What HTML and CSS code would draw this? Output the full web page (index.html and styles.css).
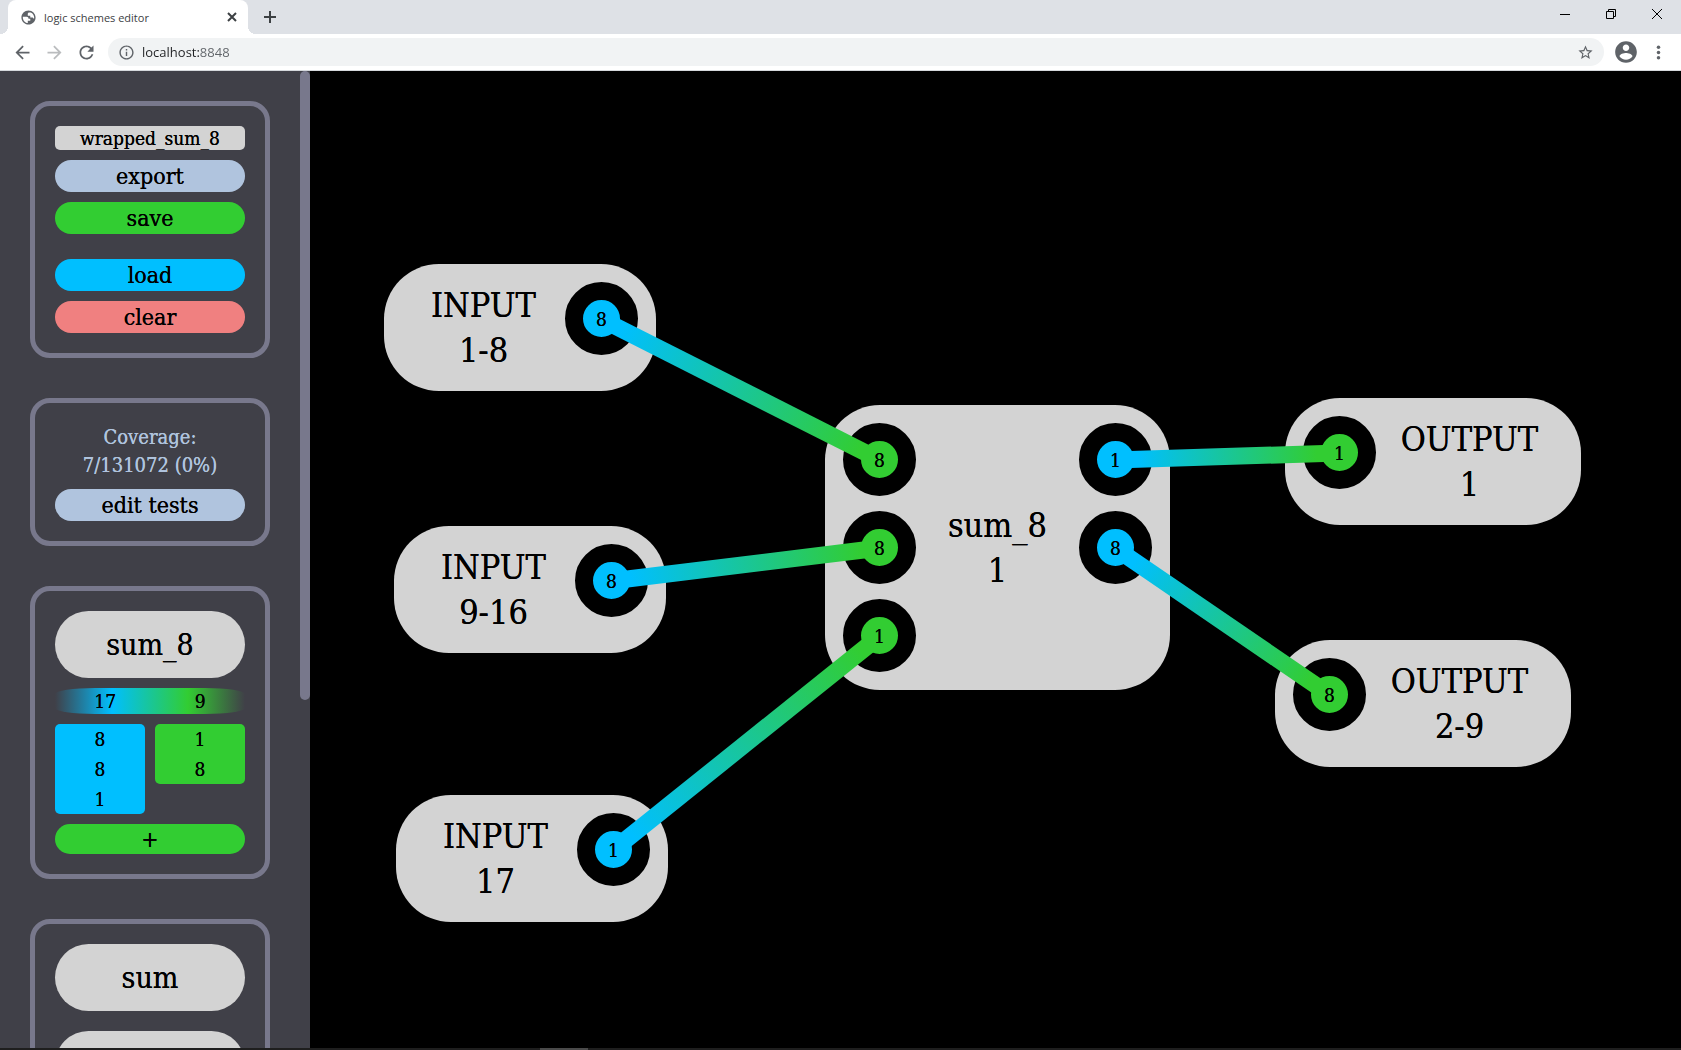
FILE: index.html
```html
<!DOCTYPE html>
<html lang="en">
<head>
<meta charset="utf-8">
<title>logic schemes editor</title>
<link rel="stylesheet" href="styles.css">
</head>
<body>
<header class="tabstrip">
  <div class="tab">
    <svg class="icon-17" viewBox="0 0 24 24" fill="#5f6368"><path d="M12 2C6.480 2 2 6.480 2 12s4.480 10 10 10 10-4.480 10-10S17.520 2 12 2zm-1 17.930c-3.950-.49-7-3.850-7-7.930 0-.3 0-.6.1-.9h5.400c1.500 0 2.500 1.200 2.500 2.500h2.500v3H11v3.330zM20 12c0 .8-.1 1.500-.3 2.200-.5-1.300-1.400-2.200-2.700-2.200h-2.500V9.500H11V7c0-1.100.9-2 2-2h2.200C18 6.300 20 9 20 12z"/></svg>
    <span class="tab-title">logic schemes editor</span>
    <button class="chrome-btn" aria-label="Close tab"><svg width="10" height="10" viewBox="0 0 10 10" stroke="#3c4043" stroke-width="2"><path d="M1 1l8 8M9 1l-8 8"/></svg></button>
  </div>
  <button class="chrome-btn new-tab" aria-label="New tab"><svg width="12" height="12" viewBox="0 0 12 12" stroke="#3c4043" stroke-width="2"><path d="M6 0v12M0 6h12"/></svg></button>
  <div class="window-controls">
    <button class="window-btn" aria-label="Minimize"><svg width="10" height="10" viewBox="0 0 10 10"><path d="M0 5.500h10" stroke="#000"/></svg></button>
    <button class="window-btn" aria-label="Restore"><svg width="10" height="10" viewBox="0 0 10 10" fill="none" stroke="#000"><path d="M.5 2.500h7v7h-7zM2.500 2.500v-2h7v7h-2"/></svg></button>
    <button class="window-btn" aria-label="Close"><svg width="10" height="10" viewBox="0 0 10 10" stroke="#000"><path d="M0 0l10 10M10 0L0 10"/></svg></button>
  </div>
</header>
<nav class="toolbar">
  <button class="chrome-btn" aria-label="Back"><svg class="icon-21" viewBox="0 0 24 24" fill="#5f6368"><path d="M20 11H7.830l5.590-5.590L12 4l-8 8 8 8 1.410-1.410L7.830 13H20v-2z"/></svg></button>
  <button class="chrome-btn" aria-label="Forward" disabled><svg class="icon-21" viewBox="0 0 24 24" fill="#babcbe"><path d="M12 4l-1.410 1.410L16.170 11H4v2h12.170l-5.580 5.590L12 20l8-8z"/></svg></button>
  <button class="chrome-btn" aria-label="Reload"><svg class="icon-21" viewBox="0 0 24 24" fill="#5f6368"><path d="M17.650 6.350C16.200 4.900 14.210 4 12 4c-4.420 0-7.990 3.580-7.990 8s3.570 8 7.990 8c3.730 0 6.840-2.550 7.730-6h-2.080c-.82 2.330-3.040 4-5.650 4-3.310 0-6-2.690-6-6s2.690-6 6-6c1.660 0 3.140.69 4.220 1.780L13 11h7V4l-2.350 2.350z"/></svg></button>
  <div class="omnibox">
    <svg class="icon-17" viewBox="0 0 24 24" fill="#5f6368"><path d="M11 17h2v-6h-2v6zm1-15C6.480 2 2 6.480 2 12s4.480 10 10 10 10-4.480 10-10S17.520 2 12 2zm0 18c-4.410 0-8-3.590-8-8s3.590-8 8-8 8 3.590 8 8-3.590 8-8 8zM11 9h2V7h-2v2z"/></svg>
    <input class="address" type="text" aria-label="Address" value="localhost:8848">
    <button class="chrome-btn" aria-label="Bookmark"><svg class="icon-17" viewBox="0 0 24 24" fill="#5f6368"><path d="M22 9.240l-7.190-.62L12 2 9.190 8.630 2 9.240l5.460 4.730L5.820 21 12 17.270 18.180 21l-1.630-7.030L22 9.240zM12 15.400l-3.760 2.270 1-4.280-3.320-2.880 4.380-.38L12 6.100l1.710 4.040 4.380.38-3.320 2.880 1 4.280L12 15.400z"/></svg></button>
  </div>
  <button class="chrome-btn profile" aria-label="Profile"><svg class="icon-26" viewBox="0 0 24 24" fill="#5f6368"><path d="M12 2C6.480 2 2 6.480 2 12s4.480 10 10 10 10-4.480 10-10S17.520 2 12 2zm0 3c1.660 0 3 1.340 3 3s-1.340 3-3 3-3-1.340-3-3 1.340-3 3-3zm0 14.200c-2.500 0-4.710-1.280-6-3.220.03-1.990 4-3.080 6-3.080 1.990 0 5.970 1.090 6 3.080-1.290 1.940-3.500 3.220-6 3.220z"/></svg></button>
  <button class="chrome-btn" aria-label="Menu"><svg class="icon-21" viewBox="0 0 24 24" fill="#5f6368"><circle cx="12" cy="6" r="2"/><circle cx="12" cy="12" r="2"/><circle cx="12" cy="18" r="2"/></svg></button>
</nav>
<main class="app">
  <aside class="sidebar">
    <div class="panels">
      <section class="panel">
        <input class="scheme-name" type="text" aria-label="Scheme name" value="wrapped_sum_8">
        <button class="btn steel">export</button>
        <button class="btn green">save</button>
        <button class="btn blue load">load</button>
        <button class="btn red">clear</button>
      </section>
      <section class="panel">
        <p class="coverage">Coverage:<br>7/131072 (0%)</p>
        <button class="btn steel">edit tests</button>
      </section>
      <section class="panel">
        <button class="block">sum_8</button>
        <div class="totals"><span>17</span><span>9</span></div>
        <div class="pins">
          <ul class="pin-list blue"><li>8</li><li>8</li><li>1</li></ul>
          <ul class="pin-list green"><li>1</li><li>8</li></ul>
        </div>
        <button class="btn add green">+</button>
      </section>
      <section class="panel library">
        <button class="block">sum</button>
        <button class="block" aria-label="Next block"></button>
      </section>
    </div>
    <div class="scroll-track"><div class="scroll-thumb"></div></div>
  </aside>
  <section class="stage">
    <article class="node input n1"><h2 class="label">INPUT<br>1-8</h2><div class="ports"><div class="port out"><span>8</span></div></div></article>
    <article class="node input n2"><h2 class="label">INPUT<br>9-16</h2><div class="ports"><div class="port out"><span>8</span></div></div></article>
    <article class="node input n3"><h2 class="label">INPUT<br>17</h2><div class="ports"><div class="port out"><span>1</span></div></div></article>
    <article class="node sum n4">
      <div class="ports"><div class="port in"><span>8</span></div><div class="port in"><span>8</span></div><div class="port in"><span>1</span></div></div>
      <h2 class="label">sum_8<br>1</h2>
      <div class="ports"><div class="port out"><span>1</span></div><div class="port out"><span>8</span></div></div>
    </article>
    <article class="node output n5"><div class="ports"><div class="port in"><span>1</span></div></div><h2 class="label">OUTPUT<br>1</h2></article>
    <article class="node output n6"><div class="ports"><div class="port in"><span>8</span></div></div><h2 class="label">OUTPUT<br>2-9</h2></article>
    <svg class="wires" fill="none" stroke-width="17">
      <defs>
        <linearGradient id="w1" gradientUnits="userSpaceOnUse" x1="291" y1="248" x2="570" y2="389"><stop offset=".07" stop-color="#00bfff"/><stop offset=".93" stop-color="#32cd32"/></linearGradient>
        <linearGradient id="w2" gradientUnits="userSpaceOnUse" x1="301" y1="510" x2="570" y2="477"><stop offset=".07" stop-color="#00bfff"/><stop offset=".93" stop-color="#32cd32"/></linearGradient>
        <linearGradient id="w3" gradientUnits="userSpaceOnUse" x1="303" y1="779" x2="570" y2="565"><stop offset=".07" stop-color="#00bfff"/><stop offset=".93" stop-color="#32cd32"/></linearGradient>
        <linearGradient id="w4" gradientUnits="userSpaceOnUse" x1="805" y1="389" x2="1029" y2="382"><stop offset=".1" stop-color="#00bfff"/><stop offset=".9" stop-color="#32cd32"/></linearGradient>
        <linearGradient id="w5" gradientUnits="userSpaceOnUse" x1="805" y1="477" x2="1020" y2="624"><stop offset=".09" stop-color="#00bfff"/><stop offset=".91" stop-color="#32cd32"/></linearGradient>
      </defs>
      <path stroke="url(#w1)" d="M291 248L570 389"/>
      <path stroke="url(#w2)" d="M301 510L570 477"/>
      <path stroke="url(#w3)" d="M303 779L570 565"/>
      <path stroke="url(#w4)" d="M805 389L1029 382"/>
      <path stroke="url(#w5)" d="M805 477L1020 624"/>
    </svg>
  </section>
</main>
<footer class="taskbar"><div class="task"></div></footer>
</body>
</html>
```
FILE: styles.css
```css
* { box-sizing: border-box; }

body {
  margin: 0;
  height: 100vh;
  display: flex;
  flex-direction: column;
  overflow: hidden;
  background: #000;
  font-family: "DejaVu Serif Condensed", "DejaVu Serif", serif;
  color: #000;
}

button, input {
  font: inherit;
  color: inherit;
  border: 0;
  margin: 0;
  padding: 0;
}

svg { display: block; flex: none; }

/* Browser frame */
.tabstrip {
  display: flex;
  flex: none;
  height: 34px;
  padding: 0 1px 0 8px;
  background: #dee1e6;
  font-family: "Open Sans", sans-serif;
}

.tab {
  position: relative;
  display: flex;
  align-items: center;
  gap: 7px;
  width: 240px;
  padding: 0 11px 0 12px;
  background: #fff;
  border-radius: 8px 8px 0 0;
}

.tab::before, .tab::after {
  content: "";
  position: absolute;
  bottom: 0;
  width: 8px;
  height: 8px;
}
.tab::before { right: 100%; background: radial-gradient(circle at 0 0, transparent 8px, #fff 8px); }
.tab::after { left: 100%; background: radial-gradient(circle at 100% 0, transparent 8px, #fff 8px); }

.tab-title { flex: 1; font-size: 11px; color: #3c4043; white-space: nowrap; }

.chrome-btn {
  display: flex;
  align-items: center;
  justify-content: center;
  background: none;
}
.new-tab { width: 44px; }
.profile { width: 22px; }

.window-controls { display: flex; margin-left: auto; }
.window-btn {
  display: flex;
  align-items: center;
  justify-content: center;
  width: 46px;
  height: 28px;
  background: none;
}

.icon-17 { width: 17px; height: 17px; }
.icon-21 { width: 21px; height: 21px; }
.icon-26 { width: 26px; height: 26px; }

.toolbar {
  display: flex;
  flex: none;
  align-items: center;
  gap: 11px;
  height: 37px;
  padding: 0 12px;
  background: #fff;
  border-bottom: 1px solid #d5d8dc;
  font-family: "Open Sans", sans-serif;
}

.omnibox {
  display: flex;
  flex: 1;
  align-items: center;
  gap: 7px;
  height: 28px;
  padding: 0 10px;
  background: #f1f3f4;
  border-radius: 14px;
}

.address {
  flex: 1;
  min-width: 0;
  font-size: 13px;
  color: transparent;
  caret-color: #202124;
  background: linear-gradient(90deg, #202124 58px, #5f6368 58px);
  -webkit-background-clip: text;
  background-clip: text;
}

/* Application */
.app {
  display: flex;
  flex: 1;
  min-height: 0;
  text-shadow: 0 0 0 currentColor;
}

.app button, .app input { text-shadow: inherit; }

.sidebar {
  display: flex;
  flex: none;
  width: 310px;
  overflow: hidden;
  background: #404048;
}

.panels {
  display: flex;
  flex: 1;
  flex-direction: column;
  gap: 40px;
  padding: 30px;
}

.panel {
  display: flex;
  flex: none;
  flex-direction: column;
  gap: 10px;
  padding: 20px;
  border: 5px solid #78788c;
  border-radius: 20px;
}
.library { gap: 20px; }

.scheme-name {
  width: 100%;
  height: 24px;
  border-radius: 5px;
  background: #d3d3d3;
  font-size: 19px;
  line-height: 24px;
  text-align: center;
}

.btn {
  height: 32px;
  border-radius: 16px;
  font-size: 23px;
  line-height: 32px;
}
.load { margin-top: 15px; }
.add { height: 30px; line-height: 30px; }

.steel { background: #b0c4de; }
.green { background: #32cd32; }
.blue { background: #00bfff; }
.red { background: #f08080; }

.coverage {
  margin: 0;
  color: #b0c4de;
  font-size: 20px;
  line-height: 28px;
  text-align: center;
}

.block {
  height: 67px;
  border-radius: 34px;
  background: #d3d3d3;
  font-size: 30px;
}

.totals {
  display: flex;
  justify-content: space-around;
  height: 26px;
  border-radius: 40px / 6px;
  background: linear-gradient(90deg, transparent, #00bfff 30%, #32cd32 70%, transparent);
  font-size: 19px;
  line-height: 26px;
}

.pins { display: flex; align-items: flex-start; gap: 10px; }
.pin-list {
  flex: 1;
  margin: 0;
  padding: 0;
  border-radius: 5px;
  list-style: none;
  font-size: 19px;
  line-height: 30px;
  text-align: center;
}

.scroll-track { flex: none; width: 10px; }
.scroll-thumb { height: 64.4%; border-radius: 5px; background: #78788c; }

/* Scheme canvas */
.stage { position: relative; flex: 1; overflow: hidden; background: #000; }

.node {
  position: absolute;
  display: flex;
  align-items: stretch;
  padding: 18px;
  border-radius: 55px;
  background: #d3d3d3;
}
.input { width: 272px; height: 127px; }
.output { width: 296px; height: 127px; }
.sum { width: 345px; }

.n1 { left: 74px; top: 193px; }
.n2 { left: 84px; top: 455px; }
.n3 { left: 86px; top: 724px; }
.n4 { left: 515px; top: 334px; }
.n5 { left: 975px; top: 327px; }
.n6 { left: 965px; top: 569px; }

.label {
  flex: 1;
  align-self: center;
  margin: 0;
  font-size: 34px;
  font-weight: 400;
  line-height: 45px;
  text-align: center;
}

.ports { display: flex; flex-direction: column; gap: 15px; }
.port {
  display: grid;
  width: 73px;
  height: 73px;
  border: 18px solid #000;
  border-radius: 50%;
  background: #000;
  place-items: center;
}
.port.in { background: #32cd32; }
.port.out { background: #00bfff; }
.port span { position: relative; z-index: 2; font-size: 19px; line-height: 24px; }

.wires { position: absolute; inset: 0; z-index: 1; width: 100%; height: 100%; }

.taskbar { flex: none; height: 2px; padding-left: 540px; background: #1e1e1e; }
.task { width: 48px; height: 2px; background: #4a4a4a; }
```
